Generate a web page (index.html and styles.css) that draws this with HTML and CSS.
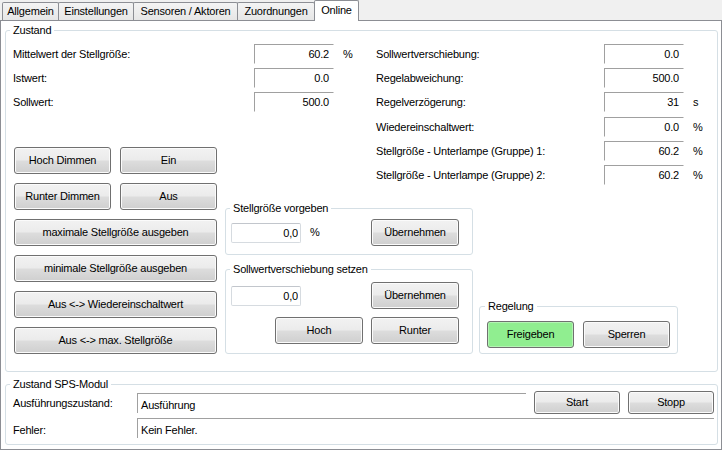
FILE: index.html
```html
<!DOCTYPE html>
<html lang="de">
<head>
<meta charset="utf-8">
<title>Online</title>
<link rel="stylesheet" href="styles.css">
</head>
<body>
<div class="tabs">
  <div class="tab t1">Allgemein</div>
  <div class="tab t2">Einstellungen</div>
  <div class="tab t3">Sensoren / Aktoren</div>
  <div class="tab t4">Zuordnungen</div>
  <div class="tab t5 active">Online</div>
</div>
<div class="panel">
  <fieldset class="group zustand">
    <legend>Zustand</legend>
    <div class="zgrid">
      <div class="fields left-fields">
        <span class="lbl">Mittelwert der Stellgröße:</span><span class="ro">60.2</span><span class="unit">%</span>
        <span class="lbl">Istwert:</span><span class="ro">0.0</span><span class="unit"></span>
        <span class="lbl">Sollwert:</span><span class="ro">500.0</span><span class="unit"></span>
      </div>
      <div class="fields right-fields">
        <span class="lbl">Sollwertverschiebung:</span><span class="ro">0.0</span><span class="unit"></span>
        <span class="lbl">Regelabweichung:</span><span class="ro">500.0</span><span class="unit"></span>
        <span class="lbl">Regelverzögerung:</span><span class="ro">31</span><span class="unit">s</span>
        <span class="lbl">Wiedereinschaltwert:</span><span class="ro">0.0</span><span class="unit">%</span>
        <span class="lbl">Stellgröße - Unterlampe (Gruppe) 1:</span><span class="ro">60.2</span><span class="unit">%</span>
        <span class="lbl">Stellgröße - Unterlampe (Gruppe) 2:</span><span class="ro">60.2</span><span class="unit">%</span>
      </div>
      <div class="btncol">
        <div class="btnrow"><button class="btn half">Hoch Dimmen</button><button class="btn half">Ein</button></div>
        <div class="btnrow"><button class="btn half">Runter Dimmen</button><button class="btn half">Aus</button></div>
        <button class="btn full">maximale Stellgröße ausgeben</button>
        <button class="btn full">minimale Stellgröße ausgeben</button>
        <button class="btn full">Aus &lt;-&gt; Wiedereinschaltwert</button>
        <button class="btn full">Aus &lt;-&gt; max. Stellgröße</button>
      </div>
      <div class="midcol">
        <fieldset class="group sub vorgeben">
          <legend>Stellgröße vorgeben</legend>
          <div class="subrow">
            <input class="inp" type="text" value="0,0"><span class="pct">%</span>
            <button class="btn wide push">Übernehmen</button>
          </div>
        </fieldset>
        <fieldset class="group sub setzen">
          <legend>Sollwertverschiebung setzen</legend>
          <div class="subrow">
            <input class="inp" type="text" value="0,0">
            <button class="btn wide push">Übernehmen</button>
          </div>
          <div class="subrow end">
            <button class="btn wide">Hoch</button>
            <button class="btn wide">Runter</button>
          </div>
        </fieldset>
      </div>
      <fieldset class="group sub regelung">
        <legend>Regelung</legend>
        <div class="regrow">
          <button class="btn wide green">Freigeben</button>
          <button class="btn wide">Sperren</button>
        </div>
      </fieldset>
    </div>
  </fieldset>
  <fieldset class="group sps">
    <legend>Zustand SPS-Modul</legend>
    <div class="spsgrid">
      <span class="slbl">Ausführungszustand:</span>
      <span class="sfield">Ausführung</span>
      <button class="btn sbtn">Start</button>
      <button class="btn sbtn">Stopp</button>
      <span class="slbl">Fehler:</span>
      <span class="sfield wide3">Kein Fehler.</span>
    </div>
  </fieldset>
</div>
</body>
</html>
```

FILE: styles.css
```css
* { box-sizing: border-box; }
html, body { margin: 0; padding: 0; }
body {
  width: 722px;
  height: 450px;
  overflow: hidden;
  background: #f0f0f0;
  color: #000;
  font: 11px/13px "Liberation Sans", Arial, sans-serif;
  letter-spacing: -0.2px;
}

/* tabs */
.tabs {
  display: flex;
  align-items: flex-end;
  height: 20px;
  padding-left: 2px;
}
.tab {
  height: 18px;
  margin-left: -1px;
  border: 1px solid #8c8e94;
  border-bottom: none;
  border-radius: 2px 2px 0 0;
  background: linear-gradient(#f4f4f4, #e6e6e6);
  text-align: center;
  line-height: 17px;
  white-space: nowrap;
}
.tab.t1 { margin-left: 0; width: 57px; }
.tab.t2 { width: 76px; }
.tab.t3 { width: 105px; }
.tab.t4 { width: 78px; }
.tab.active {
  width: 45px;
  height: 21px;
  margin-bottom: -1px;
  background: #fff;
  line-height: 18px;
  position: relative;
  z-index: 1;
}

/* panel */
.panel {
  height: 430px;
  border: 1px solid #8c8e94;
  background: #fff;
  padding: 0 3px 0 4px;
}

.group {
  margin: 0;
  padding: 0;
  min-width: 0;
  border: 1px solid #d5dfe5;
  border-radius: 3px;
}
.group legend {
  padding: 0 3px;
  line-height: 13px;
}

.zustand {
  margin-top: 3px;
  padding: 7px 0 17px 7px;
}
.zustand > legend,
.sps > legend { margin-left: -3px; }
.sub > legend { margin-left: -1px; }
.regelung > legend { margin-left: -2px; }

.zgrid {
  display: grid;
  grid-template-columns: 212px 151px 97px 1fr;
  grid-template-rows: 103px 55px auto;
}

.fields {
  display: grid;
  grid-auto-rows: 20px;
  align-content: start;
}
.left-fields {
  grid-column: 1 / 3;
  grid-row: 1;
  grid-template-columns: 241px 80px 20px;
  row-gap: 4px;
}
.right-fields {
  grid-column: 3 / 5;
  grid-row: 1 / 3;
  grid-template-columns: 228px 80px 20px;
  row-gap: 4.2px;
}
.lbl { line-height: 20px; white-space: nowrap; }
.unit { line-height: 20px; padding-left: 9px; }
.ro {
  height: 20px;
  border-top: 1px solid #a0a0a0;
  border-left: 1px solid #a0a0a0;
  border-right: 1px solid #fff;
  border-bottom: 1px solid #fff;
  text-align: right;
  padding-right: 4px;
  line-height: 18px;
}

/* buttons */
.btn {
  height: 27px;
  padding: 0;
  border: 1px solid #707070;
  border-radius: 3px;
  background: linear-gradient(#f2f2f2 0%, #ebebeb 49%, #dddddd 51%, #cfcfcf 100%);
  box-shadow: inset 0 0 0 1px #fbfbfb;
  font: inherit;
  letter-spacing: inherit;
  color: #000;
  white-space: nowrap;
}
.btn.green {
  background: #90ee90;
  box-shadow: inset 0 0 0 1px #b4f4b4;
}

.btncol {
  grid-column: 1;
  grid-row: 2 / 4;
  margin-left: 1px;
  width: 203px;
  display: flex;
  flex-direction: column;
  gap: 9px;
}
.btnrow { display: flex; gap: 9px; }
.btn.half { width: 97px; }
.btn.full { width: 203px; }
.btn.wide { width: 88px; }

.midcol {
  grid-column: 2 / 4;
  grid-row: 3;
  display: flex;
  flex-direction: column;
  gap: 8px;
}
.vorgeben { padding: 4px 13px 8px 5px; }
.setzen { padding: 6px 13px 9px 5px; }
.subrow { display: flex; align-items: center; }
.subrow.end { justify-content: flex-end; gap: 8px; margin-top: 8px; }
.push { margin-left: auto; }
.inp {
  width: 70px;
  height: 20px;
  margin: 0;
  padding: 0 2px 0 0;
  border: 1px solid #d6dbe0;
  border-top-color: #c2c6cc;
  border-radius: 2px;
  background: #fff;
  font: inherit;
  letter-spacing: inherit;
  color: #000;
  text-align: right;
  outline: none;
}
.pct { margin-left: 9px; }

.regelung {
  grid-column: 4;
  grid-row: 3;
  align-self: end;
  margin-left: 6px;
  width: 199px;
  padding: 8px 7px 5px 7px;
}
.regrow { display: flex; justify-content: space-between; }
.regelung .btn.wide { width: 87px; }

/* SPS */
.sps {
  margin-top: 6px;
  padding: 0 3px 6px 7px;
}
.spsgrid {
  display: grid;
  grid-template-columns: 116px 1fr 86px 86px;
  grid-template-rows: 23px 20px;
  column-gap: 8px;
  row-gap: 4px;
}
.slbl { padding-top: 6px; white-space: nowrap; }
.sfield {
  align-self: center;
  height: 20px;
  border-top: 1px solid #a0a0a0;
  border-left: 1px solid #a0a0a0;
  padding: 5px 0 0 3px;
  white-space: nowrap;
}
.sfield.wide3 { grid-column: 2 / 5; }
.sbtn { height: 23px; }
```
